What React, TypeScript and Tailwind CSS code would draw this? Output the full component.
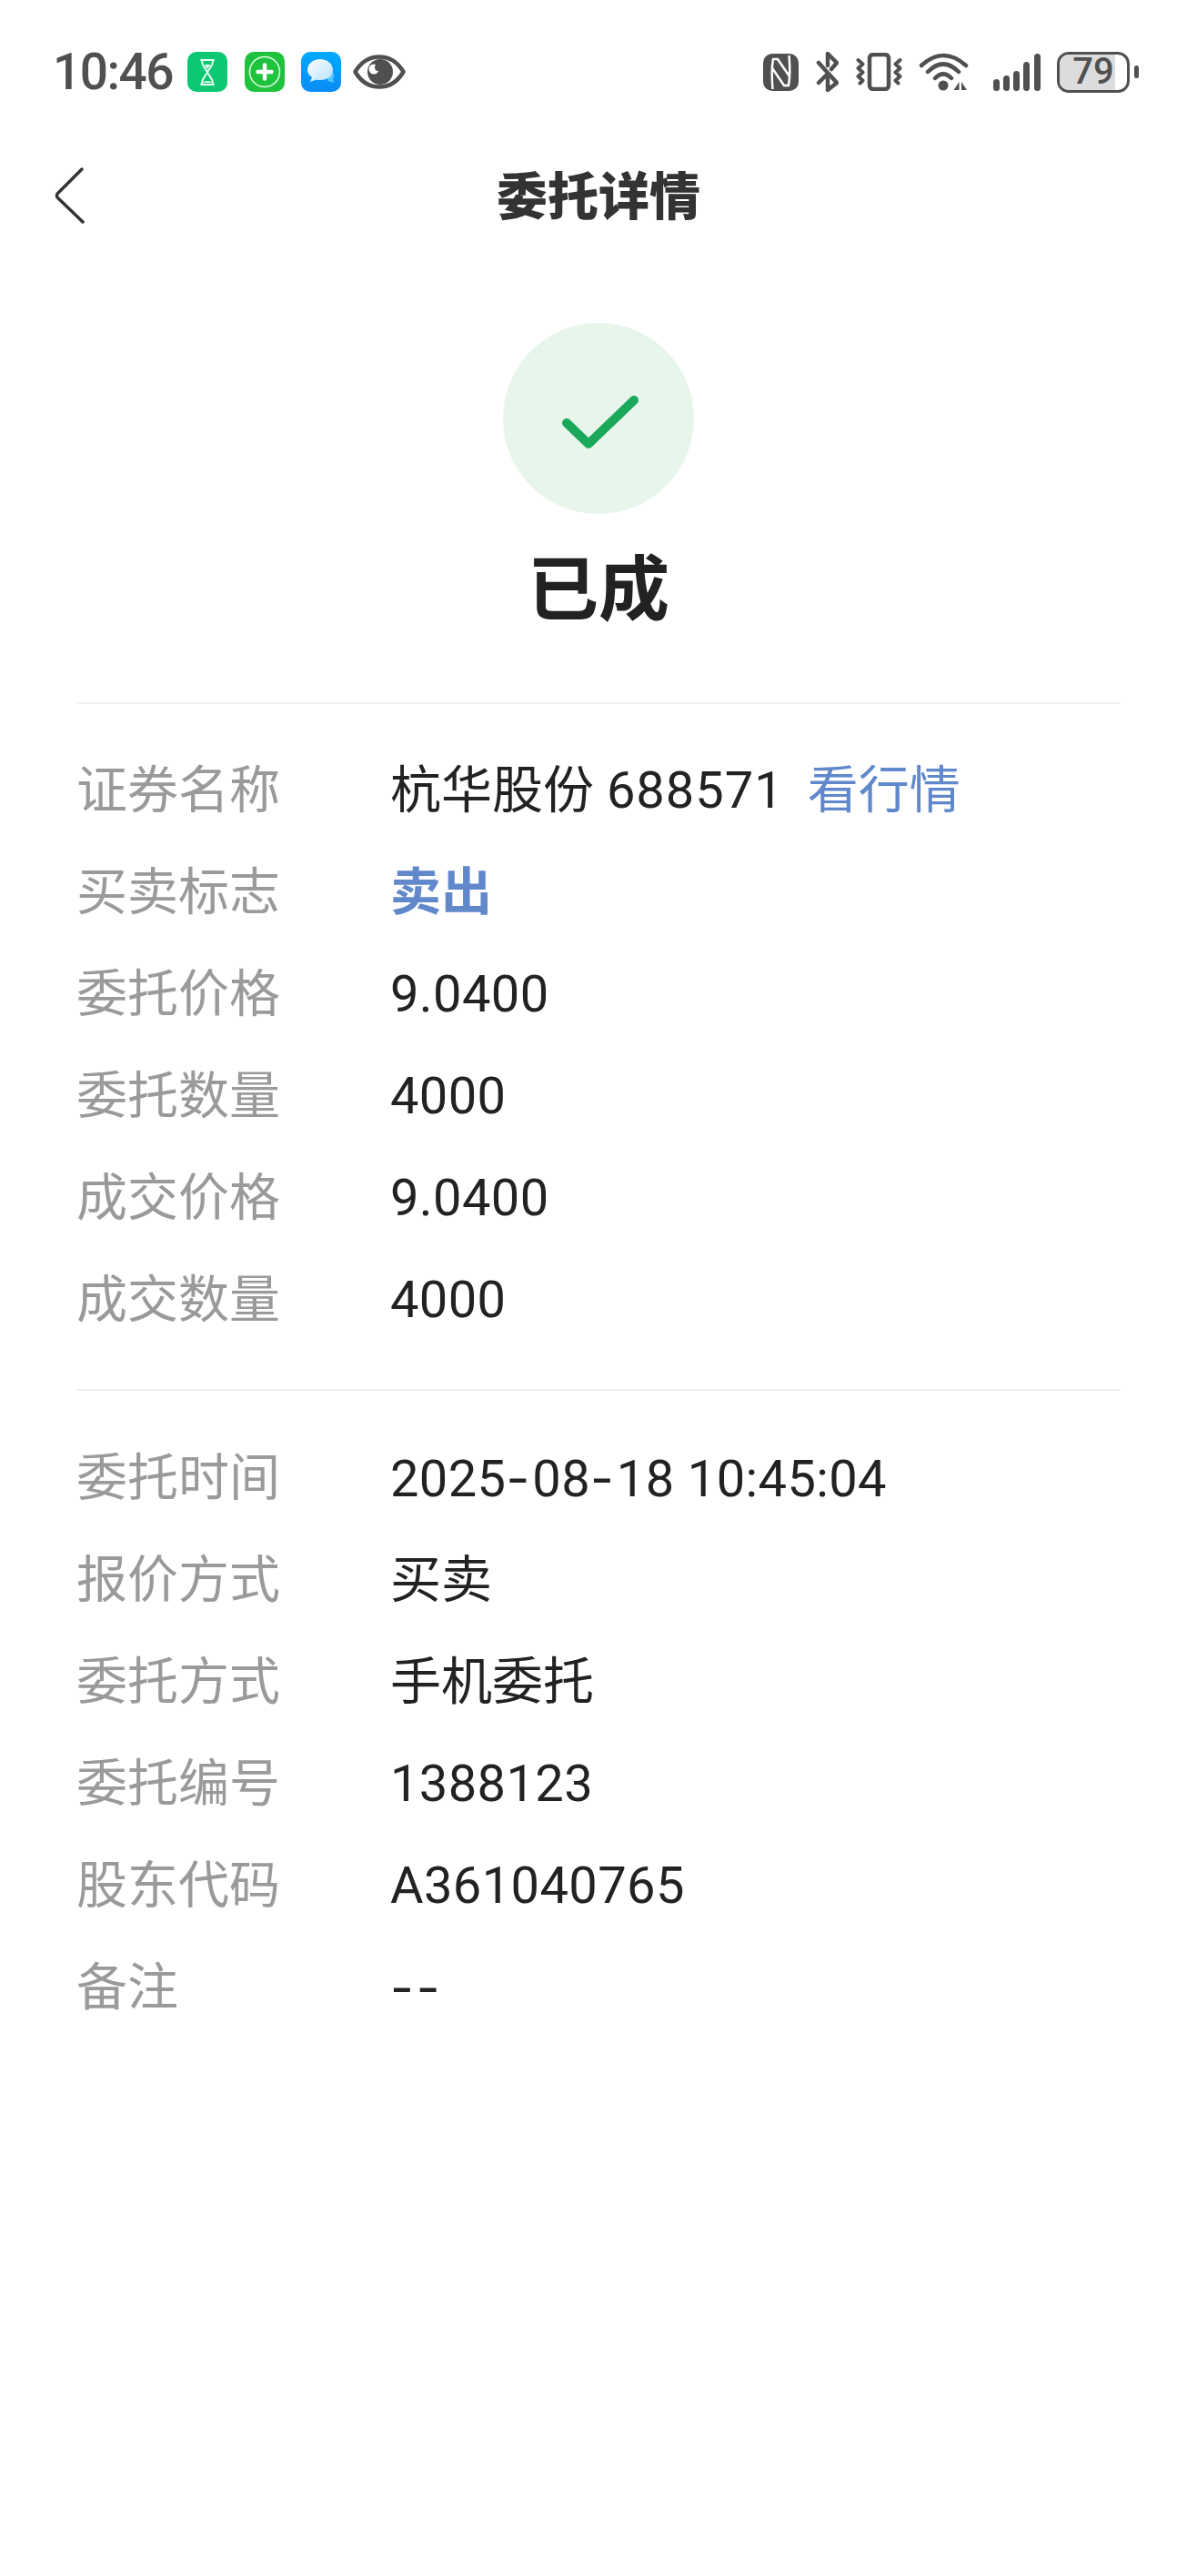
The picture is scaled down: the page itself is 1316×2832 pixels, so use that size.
import React from "react";

const baseFont = "font-['Roboto','Noto_Sans_CJK_SC',sans-serif]";

type Row = { label: string; value: React.ReactNode };

// The app's hyphen is much longer than Roboto's, so dashes are set in Inter.
function Dash() {
  return <span className="font-['Inter',sans-serif] tracking-[3px]">-</span>;
}

// Latin figures run slightly looser than the CJK text beside them.
function Num({ children }: { children: React.ReactNode }) {
  return <span className="tracking-[0.4px]">{children}</span>;
}

const orderRows: Row[] = [
  {
    label: "证券名称",
    value: (
      <>
        杭华股份 <span className="tracking-[1px]">688571</span>
        <span className="ml-[26px] text-[#6088cb]">看行情</span>
      </>
    ),
  },
  { label: "买卖标志", value: <span className="font-bold text-[#6088cb]">卖出</span> },
  { label: "委托价格", value: <Num>9.0400</Num> },
  { label: "委托数量", value: <Num>4000</Num> },
  { label: "成交价格", value: <Num>9.0400</Num> },
  { label: "成交数量", value: <Num>4000</Num> },
];

const metaRows: Row[] = [
  {
    label: "委托时间",
    value: (
      <Num>
        2025<Dash />08<Dash />18 10:45:04
      </Num>
    ),
  },
  { label: "报价方式", value: "买卖" },
  { label: "委托方式", value: "手机委托" },
  { label: "委托编号", value: <Num>1388123</Num> },
  { label: "股东代码", value: <Num>A361040765</Num> },
  { label: "备注", value: <><Dash /><Dash /></> },
];

function Rows({ rows }: { rows: Row[] }) {
  return (
    <div className="flex flex-col">
      {rows.map((r) => (
        <div key={r.label} className="flex h-[112px] items-center text-[56px] leading-none">
          <div className="w-[345px] shrink-0 text-[#9a9a9a]">{r.label}</div>
          <div className="whitespace-nowrap text-[#222222]">{r.value}</div>
        </div>
      ))}
    </div>
  );
}

function AppBadges() {
  return (
    <div className="flex items-center">
      {/* hourglass */}
      <svg width="44" height="44" viewBox="0 0 44 44" className="ml-[18px]">
        <rect width="44" height="44" rx="10" fill="#0dc873" />
        <path d="M15 9h14M15 36h14M16 10c0 6 4 8 6 12.500c2-4.500 6-6.500 6-12.500M16 35c0-6 4-8 6-12.500c2 4.500 6 6.500 6 12.500" fill="none" stroke="#e8fff3" strokeWidth="1.800" strokeLinecap="round" />
        <path d="M18.500 14h7L22 19zM17 34c2-2.500 8-2.500 10 0z" fill="#e8fff3" />
      </svg>
      {/* plus in a ring */}
      <svg width="44" height="44" viewBox="0 0 44 44" className="ml-[19px]">
        <rect width="44" height="44" rx="10" fill="#1fc23d" />
        <circle cx="22" cy="22" r="16.500" fill="none" stroke="#e6ffe9" strokeWidth="1.500" />
        <path d="M22 14.500v15M14.500 22h15" stroke="#ffffff" strokeWidth="4.500" strokeLinecap="round" />
      </svg>
      {/* message bubbles */}
      <svg width="44" height="44" viewBox="0 0 44 44" className="ml-[18px]">
        <defs>
          <linearGradient id="msgBg" x1="0" y1="0" x2="0" y2="1">
            <stop offset="0" stopColor="#00aaff" />
            <stop offset="1" stopColor="#0a8cf5" />
          </linearGradient>
          <linearGradient id="bubble" x1="0" y1="0" x2="1" y2="1">
            <stop offset="0" stopColor="#ffffff" />
            <stop offset="1" stopColor="#b5e2ff" />
          </linearGradient>
        </defs>
        <rect width="44" height="44" rx="10" fill="url(#msgBg)" />
        <path d="M30 25l6-2q1 4-1 8l2 3l-8-2z" fill="#55c4ff" />
        <path d="M21 8c8 0 14 5 14 12s-6 11-14 11c-2 0-3 0-4-.5L10 33l2-5c-3-2-5-5-5-8c0-7 6-12 14-12z" fill="url(#bubble)" />
      </svg>
      {/* eye */}
      <svg width="58" height="38" viewBox="0 0 58 38" className="ml-[13px]">
        <path d="M2.500 19C9 8 18 2.500 29 2.500S49 8 55.500 19C49 30 40 35.500 29 35.500S9 30 2.500 19z" fill="none" stroke="#505050" strokeWidth="4.500" strokeLinejoin="round" />
        <circle cx="30" cy="19" r="14" fill="#505050" />
        <circle cx="23" cy="16" r="5.500" fill="#ffffff" />
        <circle cx="28" cy="14" r="4" fill="#505050" />
      </svg>
    </div>
  );
}

function SystemIcons() {
  return (
    <div className="flex items-center">
      {/* NFC */}
      <svg width="39" height="41" viewBox="0 0 39 41">
        <rect width="39" height="41" rx="10" fill="#505050" />
        <path d="M10.500 39C9.500 28 9.500 14 11 6H16L29 25" fill="none" stroke="#ffffff" strokeWidth="2.500" />
        <path d="M28.500 2C29.500 13 29.500 26 28 35H23L10 16" fill="none" stroke="#ffffff" strokeWidth="2.500" />
      </svg>
      {/* Bluetooth, switched off */}
      <svg width="25" height="44" viewBox="0 0 25 44" className="ml-[19px]">
        <path d="M3 12L23 34L13 42V29M13 15V2L23 12L17 19M3 34L11 26" fill="none" stroke="#505050" strokeWidth="4.500" strokeLinecap="round" strokeLinejoin="round" />
      </svg>
      {/* vibrate */}
      <svg width="51" height="42" viewBox="0 0 51 42" className="ml-[19px]">
        <rect x="15" y="2" width="21" height="38" rx="4" fill="none" stroke="#505050" strokeWidth="4.500" />
        <path d="M2.500 8l5 4.500l-5 4.500l5 4.500l-5 4.500l5 4.500l-3 3M48.500 8l-5 4.500l5 4.500l-5 4.500l5 4.500l-5 4.500l3 3" fill="none" stroke="#505050" strokeWidth="4" strokeLinecap="round" strokeLinejoin="round" />
      </svg>
      {/* Wi-Fi */}
      <svg width="55" height="42" viewBox="0 0 55 42" className="ml-[18px]">
        <path d="M3 14Q27 -8 52 14M10 21Q27 4 44 21M18 28Q27 19 36 28" fill="none" stroke="#505050" strokeWidth="4.500" strokeLinecap="round" />
        <circle cx="27" cy="36" r="5.500" fill="#505050" />
        <path d="M44.500 32v9h-6zM47 32v9h6z" fill="#505050" />
      </svg>
      {/* cellular signal */}
      <svg width="52" height="41" viewBox="0 0 52 41" className="ml-[27px]">
        <rect x="0" y="28" width="7" height="13" rx="3.500" fill="#505050" />
        <rect x="11" y="24" width="7" height="17" rx="3.500" fill="#505050" />
        <rect x="22" y="19" width="7" height="22" rx="3.500" fill="#505050" />
        <rect x="33" y="9" width="7" height="32" rx="3.500" fill="#505050" />
        <rect x="45" y="0" width="7" height="41" rx="3.500" fill="#505050" />
      </svg>
      {/* battery */}
      <div className="relative ml-[18px] flex h-[45px] w-[80px] items-center justify-center overflow-hidden rounded-[13px] border-[3px] border-solid border-[#505050]">
        <div className="absolute inset-y-0 left-0 w-[61px] bg-[#dcdcdc]" />
        <span className="relative font-['Roboto',sans-serif] text-[40px] font-medium leading-none text-[#505050]">79</span>
      </div>
      <div className="ml-[5px] h-[14px] w-[5px] rounded-full bg-[#505050]" />
    </div>
  );
}

export default function App() {
  return (
    <div className={`flex h-[2832px] w-[1316px] flex-col bg-white ${baseFont}`}>
      {/* status bar */}
      <div className="flex h-[158px] items-center justify-between pl-[58px] pr-[64px]">
        <div className="flex items-center">
          <span className="w-[130px] whitespace-nowrap font-['Roboto',sans-serif] text-[55px] font-medium leading-none tracking-[-1.5px] text-[#505050]">
            10:46
          </span>
          <AppBadges />
        </div>
        <SystemIcons />
      </div>

      {/* navigation bar */}
      <div className="relative flex h-[118px] items-center justify-center">
        <svg width="34" height="62" viewBox="0 0 34 62" className="absolute left-[59px] top-[26px]">
          <path d="M31 2L4 29Q3 31 4 33L32 60" fill="none" stroke="#333333" strokeWidth="3.500" strokeLinecap="round" />
        </svg>
        <h1 className="text-[56px] font-black leading-none text-[#333333]">委托详情</h1>
      </div>

      {/* order status */}
      <div className="mt-[79px] flex flex-col items-center">
        <div className="flex h-[210px] w-[210px] items-center justify-center rounded-full bg-[#e7f5ea]">
          <svg width="96" height="70" viewBox="0 0 96 70">
            <path d="M13 40L37 63L87 15" fill="none" stroke="#1aa85a" strokeWidth="10" strokeLinecap="round" strokeLinejoin="round" />
          </svg>
        </div>
        <div className="mt-[46px] text-[78px] font-bold leading-none text-[#222222]">已成</div>
      </div>

      {/* details */}
      <div className="mx-[84px] mt-[83px] border-t-2 border-solid border-[#f0f0f0] pt-[39px]">
        <Rows rows={orderRows} />
      </div>
      <div className="mx-[84px] mt-[42px] border-t-2 border-solid border-[#f0f0f0] pt-[40px]">
        <Rows rows={metaRows} />
      </div>
    </div>
  );
}
